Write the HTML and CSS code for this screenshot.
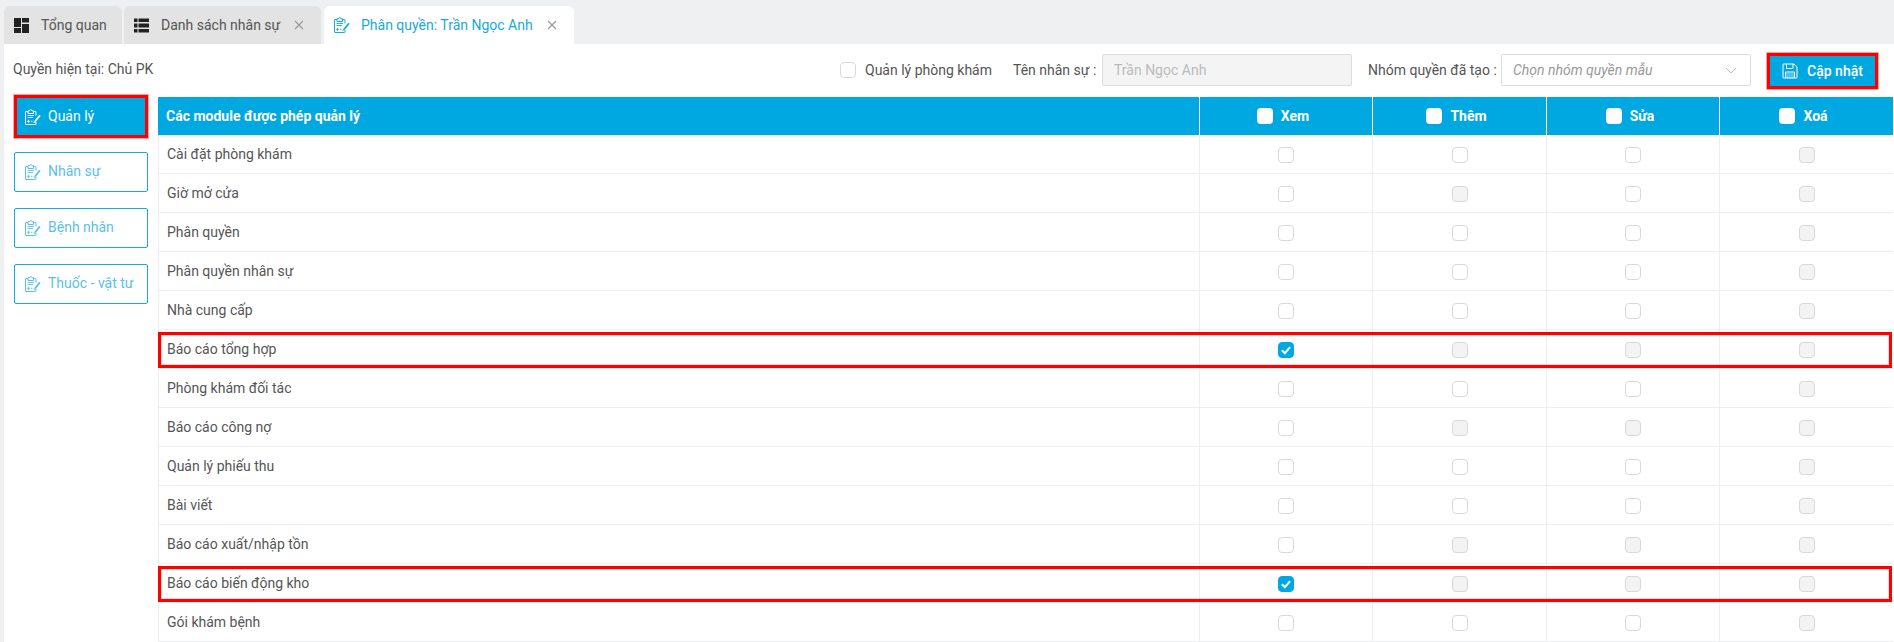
FILE: index.html
```html
<!DOCTYPE html>
<html lang="vi">
<head>
<meta charset="utf-8">
<title>Phân quyền</title>
<link rel="stylesheet" href="styles.css">
</head>
<body>
<svg class="defs" width="0" height="0" aria-hidden="true">
  <symbol id="clip" viewBox="0 0 16 16">
    <path d="M8.500 2.500H10.500a.5.500 0 0 1 .5.500V6.500M11 13V15a.5.500 0 0 1-.5.500H1a.5.500 0 0 1-.5-.500V3a.5.500 0 0 1 .5-.500H3" fill="none" stroke="currentColor" stroke-width="1"/>
    <path d="M3 4.500V1.800H4.500a1.200 1.200 0 0 1 2.400 0H8.500V4.500Z" fill="none" stroke="currentColor" stroke-width="1"/>
    <path d="M2.500 6.500H9M2.500 8.500H8M2 12.300H5M3.500 10.800V13.800M6 12.300H7.500" fill="none" stroke="currentColor" stroke-width=".9"/>
    <path d="M10 12.500L15 6.200" fill="none" stroke="currentColor" stroke-width="1.800"/>
    <path d="M9 12L10.700 13.300L8.500 14Z" fill="currentColor"/>
  </symbol>
</svg>
<div class="tabs">
  <div class="tab tab-home"><svg class="tab-ico" viewBox="0 0 15 15"><path d="M0 0H7V9H0ZM8 0H15V4.500H8ZM8 6H15V15H8ZM0 10H7V15H0Z"/></svg><span>Tổng quan</span></div>
  <div class="tab tab-list"><svg class="tab-ico" viewBox="0 0 15 15"><path d="M0 0.500H3.500V4H0ZM4.500 0.500H15V4H4.500ZM0 5.500H3.500V9.500H0ZM4.500 5.500H15V9.500H4.500ZM0 11H3.500V14.500H0ZM4.500 11H15V14.500H4.500Z"/></svg><span>Danh sách nhân sự</span><svg class="close" viewBox="0 0 10 10"><path d="M1 1L9 9M9 1L1 9"/></svg></div>
  <div class="tab tab-active"><svg class="clip clip-tab"><use href="#clip"/></svg><span>Phân quyền: Trần Ngọc Anh</span><svg class="close" viewBox="0 0 10 10"><path d="M1 1L9 9M9 1L1 9"/></svg></div>
</div>
<main class="panel">
  <div class="toolbar">
    <div class="current">Quyền hiện tại: Chủ PK</div>
    <label class="check-label"><span class="box"></span>Quản lý phòng khám</label>
    <span class="name-label">Tên nhân sự :</span>
    <div class="input disabled">Trần Ngọc Anh</div>
    <span class="group-label">Nhóm quyền đã tạo :</span>
    <div class="input select"><em>Chọn nhóm quyền mẫu</em><svg class="chev" viewBox="0 0 12 7"><path d="M1 1L6 6L11 1"/></svg></div>
    <button class="save marked" type="button"><svg class="save-ico" viewBox="0 0 16 16"><path class="slot" d="M4 10H12V15H4Z"/><path d="M1.500 1H12L15 4V14.500a.5.500 0 0 1-.5.500H1.500a.5.500 0 0 1-.5-.500V1.500a.5.500 0 0 1 .5-.500ZM4.500 1V5.500H11V1M3.500 15V9H12.500V15"/></svg>Cập nhật</button>
  </div>
  <div class="content">
    <nav class="side">
      <a class="side-btn active marked"><svg class="clip"><use href="#clip"/></svg>Quản lý</a>
      <a class="side-btn"><svg class="clip"><use href="#clip"/></svg>Nhân sự</a>
      <a class="side-btn"><svg class="clip"><use href="#clip"/></svg>Bệnh nhân</a>
      <a class="side-btn"><svg class="clip"><use href="#clip"/></svg>Thuốc - vật tư</a>
    </nav>
    <div class="grid">
      <div class="row head">
        <div class="c name">Các module được phép quản lý</div>
        <div class="c"><span class="hbox"></span>Xem</div>
        <div class="c"><span class="hbox"></span>Thêm</div>
        <div class="c"><span class="hbox"></span>Sửa</div>
        <div class="c"><span class="hbox"></span>Xoá</div>
      </div>
      <div class="row"><div class="c name">Cài đặt phòng khám</div><div class="c"><span class="box"></span></div><div class="c"><span class="box"></span></div><div class="c"><span class="box"></span></div><div class="c"><span class="box off"></span></div></div>
      <div class="row"><div class="c name">Giờ mở cửa</div><div class="c"><span class="box"></span></div><div class="c"><span class="box off"></span></div><div class="c"><span class="box"></span></div><div class="c"><span class="box off"></span></div></div>
      <div class="row"><div class="c name">Phân quyền</div><div class="c"><span class="box"></span></div><div class="c"><span class="box"></span></div><div class="c"><span class="box"></span></div><div class="c"><span class="box off"></span></div></div>
      <div class="row"><div class="c name">Phân quyền nhân sự</div><div class="c"><span class="box"></span></div><div class="c"><span class="box"></span></div><div class="c"><span class="box"></span></div><div class="c"><span class="box off"></span></div></div>
      <div class="row"><div class="c name">Nhà cung cấp</div><div class="c"><span class="box"></span></div><div class="c"><span class="box"></span></div><div class="c"><span class="box"></span></div><div class="c"><span class="box off"></span></div></div>
      <div class="row marked-row"><div class="c name">Báo cáo tổng hợp</div><div class="c"><span class="box on"><svg viewBox="0 0 12 12"><path d="M2.500 6.200L5 8.700L9.500 3.500"/></svg></span></div><div class="c"><span class="box off"></span></div><div class="c"><span class="box off"></span></div><div class="c"><span class="box off"></span></div></div>
      <div class="row"><div class="c name">Phòng khám đối tác</div><div class="c"><span class="box"></span></div><div class="c"><span class="box"></span></div><div class="c"><span class="box"></span></div><div class="c"><span class="box off"></span></div></div>
      <div class="row"><div class="c name">Báo cáo công nợ</div><div class="c"><span class="box"></span></div><div class="c"><span class="box off"></span></div><div class="c"><span class="box off"></span></div><div class="c"><span class="box off"></span></div></div>
      <div class="row"><div class="c name">Quản lý phiếu thu</div><div class="c"><span class="box"></span></div><div class="c"><span class="box"></span></div><div class="c"><span class="box"></span></div><div class="c"><span class="box off"></span></div></div>
      <div class="row"><div class="c name">Bài viết</div><div class="c"><span class="box"></span></div><div class="c"><span class="box"></span></div><div class="c"><span class="box"></span></div><div class="c"><span class="box off"></span></div></div>
      <div class="row"><div class="c name">Báo cáo xuất/nhập tồn</div><div class="c"><span class="box"></span></div><div class="c"><span class="box off"></span></div><div class="c"><span class="box off"></span></div><div class="c"><span class="box off"></span></div></div>
      <div class="row marked-row"><div class="c name">Báo cáo biến động kho</div><div class="c"><span class="box on"><svg viewBox="0 0 12 12"><path d="M2.500 6.200L5 8.700L9.500 3.500"/></svg></span></div><div class="c"><span class="box off"></span></div><div class="c"><span class="box off"></span></div><div class="c"><span class="box off"></span></div></div>
      <div class="row"><div class="c name">Gói khám bệnh</div><div class="c"><span class="box"></span></div><div class="c"><span class="box"></span></div><div class="c"><span class="box"></span></div><div class="c"><span class="box off"></span></div></div>
    </div>
  </div>
</main>
</body>
</html>
```
FILE: styles.css
```css
* { box-sizing: border-box; }
html, body { margin: 0; height: 100%; overflow: hidden; }
body { background: #eff0f2; font-family: Roboto, "Noto Sans", sans-serif; font-size: 14px; color: #555; width: 1894px; height: 642px; }
.defs { position: absolute; }

.tabs { display: flex; gap: 2px; height: 44px; padding: 6px 0 0 4px; }
.tab { display: flex; align-items: center; height: 38px; padding-left: 10px; background: #e3e3e3; border-radius: 6px 6px 0 0; color: #555; white-space: nowrap; }
.tab-home { width: 118px; }
.tab-list { width: 197px; }
.tab-active { width: 250px; margin-left: 1px; background: #fff; color: #17a9e1; }
.tab-ico { width: 15px; height: 15px; margin-right: 12px; flex: none; fill: #222; }
.close { width: 10px; height: 10px; margin-left: 14px; fill: none; stroke: #999; stroke-width: 1.100; flex: none; }
.clip { width: 16px; height: 16px; flex: none; margin-right: 7px; color: inherit; }
.clip-tab { margin-right: 11px; color: #17a9e1; }

.panel { background: #fff; margin-left: 4px; height: 598px; overflow: hidden; }
.toolbar { display: flex; align-items: center; height: 53px; padding: 0 0 1px 9px; white-space: nowrap; }
.current { width: 827px; margin-top: -3px; }
.check-label { display: flex; align-items: center; gap: 9px; width: 173px; }
.name-label { width: 89px; }
.input { height: 32px; border: 1px solid #ddd; border-radius: 2px; display: flex; align-items: center; padding: 0 11px; color: #999; width: 250px; }
.input.disabled { background: #f4f4f4; color: #bbb; }
.group-label { width: 133px; margin-left: 16px; }
.select { justify-content: space-between; margin-right: 16px; }
.chev { width: 12px; height: 7px; fill: none; stroke: #bbb; stroke-width: 1; margin-right: 2px; }
.save { display: flex; align-items: center; gap: 9px; width: 111px; height: 36px; margin-top: 2px; justify-content: center; border: 0; background: #00a8e1; color: #fff; font-family: inherit; font-size: 14px; font-weight: 500; padding: 0; }
.save-ico { width: 16px; height: 16px; fill: none; stroke: #fff; stroke-width: 1; }
.save-ico .slot { fill: rgba(255,255,255,.3); stroke: none; }
.marked { outline: 3px solid #ff0000; outline-offset: -3px; box-shadow: 0 0 0 1px rgba(255,0,0,.35); }

.content { display: flex; gap: 10px; padding-left: 10px; }
.side { width: 134px; flex: none; display: flex; flex-direction: column; gap: 16px; margin-top: -2px; }
.side-btn { display: flex; align-items: center; height: 40px; padding: 0 0 2px 10px; border: 1px solid #17a9e1; border-radius: 2px; color: #5bbfe9; }
.side-btn .clip { margin-top: 2px; }
.side-btn.active { background: #00a8e1; color: #fff; height: 43px; margin-bottom: -2px; border-radius: 0; }

.grid { flex: none; width: 1735px; }
.row { display: grid; grid-template-columns: 1042px 173px 174px 173px 173px; height: 39px; border-bottom: 1px solid #eceeef; position: relative; }
.c { display: flex; align-items: center; justify-content: center; border-right: 1px solid #eceeef; }
.c.name { justify-content: flex-start; padding-left: 8px; border-left: 1px solid #eceeef; }
.head { height: 38px; background: #00a8e1; color: #fff; font-weight: 700; border: 0; }
.head .c { border-right: 1px solid #fff; gap: 8px; padding-right: 6px; }
.head .c.name { border-left: 0; }
.row .c:last-child { border-right: 0; }
.hbox { width: 16px; height: 16px; border-radius: 4px; background: #fff; flex: none; }
.box { display: block; width: 16px; height: 16px; border: 1px solid #d9d9d9; border-radius: 4px; background: #fff; flex: none; }
.c .box { margin-top: 2px; }
.box.off { background: #f3f3f3; }
.box.on { background: #00a8e1; border-color: #00a8e1; }
.box.on svg { display: block; width: 14px; height: 14px; fill: none; stroke: #fff; stroke-width: 1.800; }
.marked-row::after { content: ""; position: absolute; inset: 2px 1px 0 0; border: 3px solid #ff0000; box-shadow: inset 0 0 0 1px rgba(255,0,0,.15); pointer-events: none; }
```
